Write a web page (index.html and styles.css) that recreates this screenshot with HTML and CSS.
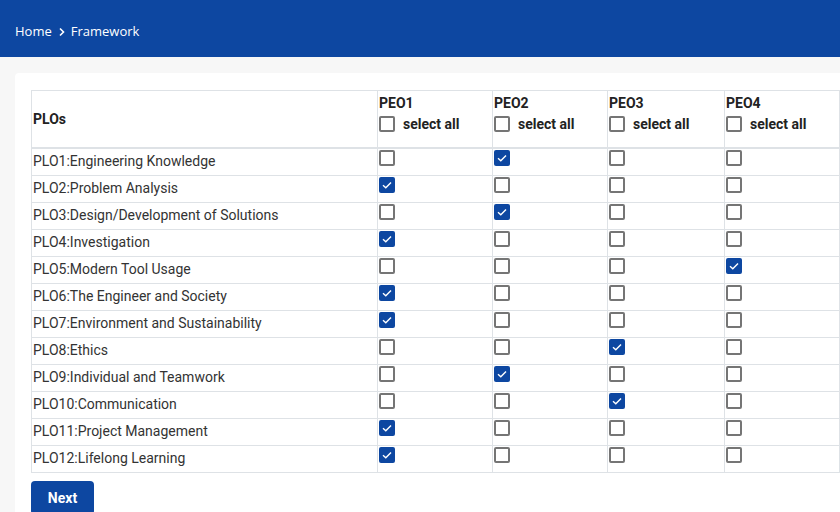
FILE: index.html
```html
<!DOCTYPE html>
<html>
<head>
<meta charset="utf-8">
<link rel="stylesheet" href="styles.css">
</head>
<body>
<header class="topbar">
  <nav class="crumbs">
    <span>Home</span>
    <svg class="sep" width="8" height="10" viewBox="0 0 8 10"><path d="M2 1.5 L5.5 5 L2 8.5" fill="none" stroke="#fff" stroke-width="1.6"/></svg>
    <span>Framework</span>
  </nav>
</header>
<main class="page">
  <section class="card">
    <table class="map">
      <colgroup>
        <col class="c-plo"><col class="c-peo"><col class="c-peo"><col class="c-peo4"><col class="c-peo">
      </colgroup>
      <thead>
        <tr>
          <th class="plo-head">PLOs</th>
          <th><div class="peo">PEO1</div><div class="sel"><span class="box"></span><span>select all</span></div></th>
          <th><div class="peo">PEO2</div><div class="sel"><span class="box"></span><span>select all</span></div></th>
          <th><div class="peo">PEO3</div><div class="sel"><span class="box"></span><span>select all</span></div></th>
          <th><div class="peo">PEO4</div><div class="sel"><span class="box"></span><span>select all</span></div></th>
        </tr>
      </thead>
      <tbody id="rows"></tbody>
    </table>
    <button class="next">Next</button>
  </section>
</main>
<script>
const plos = [
  ["PLO1:Engineering Knowledge", 2],
  ["PLO2:Problem Analysis", 1],
  ["PLO3:Design/Development of Solutions", 2],
  ["PLO4:Investigation", 1],
  ["PLO5:Modern Tool Usage", 4],
  ["PLO6:The Engineer and Society", 1],
  ["PLO7:Environment and Sustainability", 1],
  ["PLO8:Ethics", 3],
  ["PLO9:Individual and Teamwork", 2],
  ["PLO10:Communication", 3],
  ["PLO11:Project Management", 1],
  ["PLO12:Lifelong Learning", 1]
];
const check = '<svg width="16" height="16" viewBox="0 0 16 16"><path d="M4 8.2 L6.8 10.8 L12 5.4" fill="none" stroke="#fff" stroke-width="1.4"/></svg>';
const tb = document.getElementById("rows");
plos.forEach(([name, on]) => {
  const tr = document.createElement("tr");
  let html = '<td class="name">' + name + '</td>';
  for (let i = 1; i <= 4; i++) {
    html += '<td><span class="box' + (i === on ? ' on">' + check : '">') + '</span></td>';
  }
  tr.innerHTML = html;
  tb.appendChild(tr);
});
</script>
</body>
</html>
```

FILE: styles.css
```css
html, body {
  margin: 0;
  padding: 0;
  overflow: hidden;
  background: #f7f7f7;
}
body {
  font-family: Roboto, "Liberation Sans", sans-serif;
  font-size: 14px;
  color: #333;
}
.topbar {
  height: 57px;
  background: #0d47a1;
  display: flex;
  align-items: center;
  padding-left: 15px;
}
.crumbs {
  display: flex;
  align-items: center;
  gap: 5px;
  color: #fff;
  font-family: "Open Sans", "Noto Sans", sans-serif;
  font-size: 13px;
  margin-top: 4px;
}
.crumbs .sep { margin: 2px 0 0 1px; }
.page {
  padding: 16px 0 0 15px;
}
.card {
  background: #fff;
  border-radius: 4px;
  padding: 17px 16px 16px 16px;
  width: 810px;
}
.map {
  border-collapse: collapse;
  table-layout: fixed;
  width: 809px;
}
.c-plo { width: 346px; }
.c-peo { width: 115px; }
.c-peo4 { width: 117px; }
.map th, .map td {
  border: 1px solid #dee2e6;
  text-align: left;
  vertical-align: top;
}
.map thead th {
  border-bottom: 2px solid #dee2e6;
  padding: 2px 1px 13px 1px;
  font-weight: bold;
  color: #222;
  line-height: 20px;
}
.map thead th.plo-head {
  vertical-align: middle;
  padding: 2px 1px 2px 1px;
}
.peo { height: 20px; }
.sel {
  margin-top: 1px;
  height: 20px;
  display: flex;
  align-items: center;
  gap: 8px;
}
.map td {
  padding: 1px 1px 5px 1px;
  line-height: 20px;
  height: 20px;
}
.map td.name { color: #333; padding-top: 2px; padding-bottom: 4px; }
.box {
  display: block;
  box-sizing: border-box;
  width: 16px;
  height: 16px;
  border: 2px solid #757575;
  border-radius: 2px;
  background: #fff;
  flex: none;
}
.box.on {
  border: none;
  background: #0d47a1;
}
.box svg { display: block; }
.next {
  margin-top: 8px;
  height: 34px;
  width: 63px;
  border: none;
  border-radius: 4px;
  background: #0d47a1;
  color: #fff;
  font-family: Roboto, "Liberation Sans", sans-serif;
  font-weight: bold;
  font-size: 14px;
  padding: 0;
  cursor: pointer;
}
```
